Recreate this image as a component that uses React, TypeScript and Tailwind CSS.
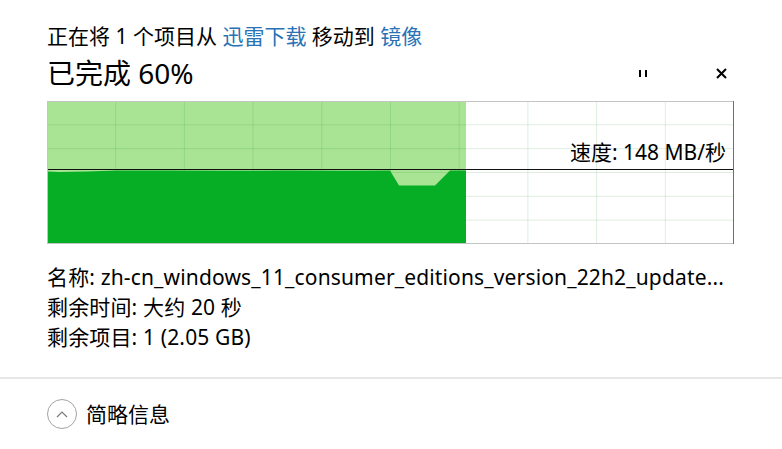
const fontStack = '"Noto Sans", "Noto Sans CJK SC", sans-serif';

// speed history, relative to the chart box (687 x 143)
const speedPoints = [
  [0, 70.5], [12, 71], [40, 70.5], [70, 69.5], [120, 69.5], [180, 69.8],
  [240, 69.5], [300, 69.7], [343, 69.5], [352, 84.5], [388, 84.5], [403, 69.5], [419, 69.5],
];

function SpeedChart() {
  const w = 687;
  const h = 143;
  const done = 419;
  const cols = Array.from({ length: 9 }, (_, i) => ((i + 1) * w) / 10);
  const rows = Array.from({ length: 5 }, (_, i) => ((i + 1) * h) / 6);
  const poly = [...speedPoints, [done, h], [0, h]].map(([x, y]) => `${x},${y}`).join(' ');

  return (
    <div className="relative w-[687px] h-[143px]">
      <svg width={w} height={h} viewBox={`0 0 ${w} ${h}`} className="block">
        <rect x="0" y="0" width={w} height={h} fill="#ffffff" />
        <rect x="0" y="0" width={done} height={h} fill="#a9e494" />
        {cols.map((x) => (
          <line key={x} x1={x} y1="0" x2={x} y2={h} stroke="#0a7a1a" strokeOpacity="0.13" strokeWidth="1" />
        ))}
        {rows.map((y) => (
          <line key={y} x1="0" y1={y} x2={w} y2={y} stroke="#0a7a1a" strokeOpacity="0.13" strokeWidth="1" />
        ))}
        <polygon points={poly} fill="#06ae26" />
        <line x1="0" y1="68.5" x2={w} y2="68.5" stroke="#111" strokeWidth="1.2" />
        <line x1="0" y1="0.5" x2={w} y2="0.5" stroke="#c4c4c4" />
        <line x1="0" y1={h - 0.5} x2={w} y2={h - 0.5} stroke="#c4c4c4" />
        <line x1="0.5" y1="0" x2="0.5" y2={h} stroke="#c4c4c4" />
        <line x1={w - 0.5} y1="0" x2={w - 0.5} y2={h} stroke="#2e9a3e" />
      </svg>
      <span className="absolute right-[8px] top-[38px] text-[21px] leading-[26px] text-black">
        速度: 148 MB/秒
      </span>
    </div>
  );
}

export default function App() {
  return (
    <div className="w-[782px] h-[449px] bg-white text-black overflow-hidden" style={{ fontFamily: fontStack }}>
      {/* Header */}
      <div className="pl-[47px] pt-[22px]">
        <p className="text-[21px] leading-[28px]">
          正在将 1 个项目从 <span className="text-[#2a72b5]">迅雷下载</span> 移动到{' '}
          <span className="text-[#2a72b5]">镜像</span>
        </p>
        <div className="flex items-center h-[38px] mt-[4px]">
          <h1 className="text-[28px] leading-[38px] flex-1">已完成 60%</h1>
          <button className="w-[40px] h-[30px] flex items-center justify-center gap-[4px] mr-[38px]">
            <span className="w-[2px] h-[7px] bg-black" />
            <span className="w-[2px] h-[7px] bg-black" />
          </button>
          <button className="w-[40px] h-[30px] flex items-center justify-center mr-[41px]">
            <svg width="11" height="11" viewBox="0 0 11 11">
              <path d="M1 1 L10 10 M10 1 L1 10" stroke="#000" strokeWidth="2" />
            </svg>
          </button>
        </div>
      </div>

      {/* Chart */}
      <div className="pl-[47px] mt-[9px]">
        <SpeedChart />
      </div>

      {/* Details */}
      <div className="pl-[47px] mt-[18px] text-[21px] leading-[30px] tracking-[0.15px]">
        <p>名称: zh-cn_windows_11_consumer_editions_version_22h2_update...</p>
        <p>剩余时间: 大约 20 秒</p>
        <p>剩余项目: 1 (2.05 GB)</p>
      </div>

      <div className="mt-[25px] h-[2px] bg-[#e6e6e6]" />

      {/* Footer */}
      <div className="flex items-center gap-[9px] pl-[47px] pt-[20px]">
        <span className="w-[30px] h-[30px] rounded-full border border-[#a3a3a3] flex items-center justify-center">
          <svg width="12" height="8" viewBox="0 0 12 8">
            <path d="M1 7 L6 2 L11 7" fill="none" stroke="#7a7a7a" strokeWidth="1.2" />
          </svg>
        </span>
        <span className="text-[21px] leading-[30px]">简略信息</span>
      </div>
    </div>
  );
}
